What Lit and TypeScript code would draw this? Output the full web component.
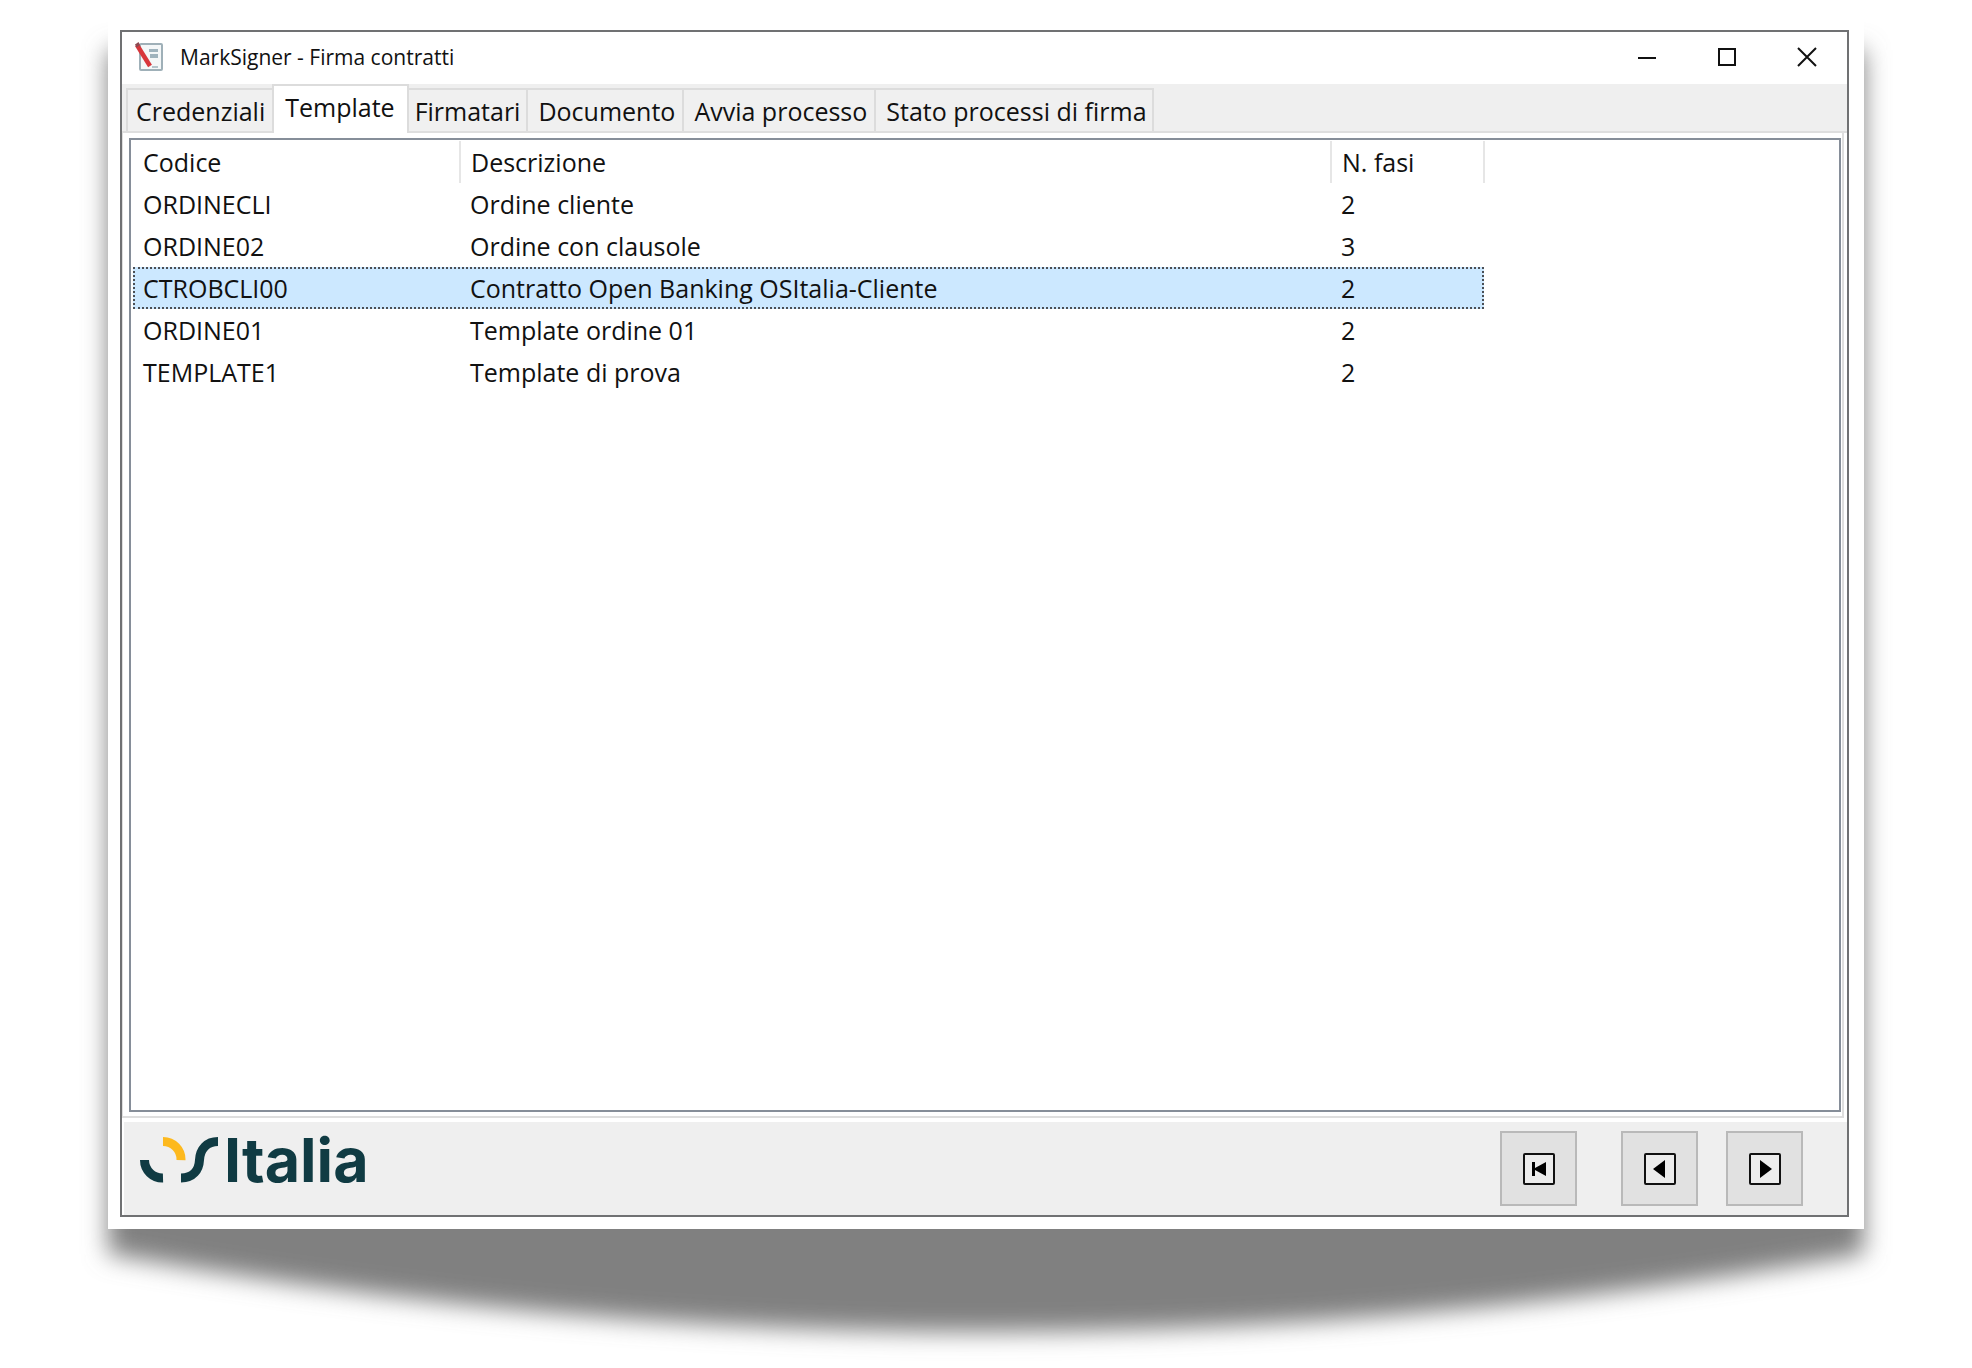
import { LitElement, html, css, svg } from "lit";
import { customElement, state } from "lit/decorators.js";
import { classMap } from "lit/directives/class-map.js";

interface Template { code: string; description: string; phases: number; }

const TABS = ["Credenziali", "Template", "Firmatari", "Documento", "Avvia processo", "Stato processi di firma"];

const TEMPLATES: Template[] = [
  { code: "ORDINECLI", description: "Ordine cliente", phases: 2 },
  { code: "ORDINE02", description: "Ordine con clausole", phases: 3 },
  { code: "CTROBCLI00", description: "Contratto Open Banking OSItalia-Cliente", phases: 2 },
  { code: "ORDINE01", description: "Template ordine 01", phases: 2 },
  { code: "TEMPLATE1", description: "Template di prova", phases: 2 },
];

const NAV = [
  { label: "Primo", shape: svg`<path d="M10 10h3v6l11-6v14l-11-6v6h-3z"/>` },
  { label: "Precedente", shape: svg`<path d="M22 8v18L10 17z"/>` },
  { label: "Successivo", shape: svg`<path d="M12 8v18l12-9z"/>` },
];

@customElement("app-root")
export class AppRoot extends LitElement {
  @state() private tab = 1;
  @state() private selected = 2;

  static styles = css`
    :host {
      display: flex;
      min-height: 100vh;
      box-sizing: border-box;
      padding: 0 108px 139px;
      background: #fff;
      color: #111;
      font: 25px/42px "Open Sans", "Noto Sans", sans-serif;
      overflow: hidden;
    }
    * { box-sizing: border-box; }
    button { font: inherit; color: inherit; border: 0; background: none; padding: 0; margin: 0; }
    svg { display: block; }
    .sheet { position: relative; flex: 1; display: flex; padding: 30px 15px 12px 12px; min-width: 0; }
    .shadow { position: absolute; inset: 0 -108px -139px; width: calc(100% + 216px); height: calc(100% + 139px); }
    .paper { position: absolute; inset: 0; background: #fff; }
    .window {
      position: relative; flex: 1; min-width: 0;
      display: flex; flex-direction: column;
      border: 2px solid #707173; background: #fff;
    }
    .titlebar { display: flex; align-items: center; height: 52px; padding: 0 10px 2px 12px; flex: none; }
    .title { flex: 1; margin: 0 0 0 16px; font-size: 21px; line-height: 28px; font-weight: 400; }
    .sys { display: flex; gap: 20px; }
    .sys button { width: 60px; height: 40px; display: grid; place-items: center; }
    .tabs { display: flex; align-items: flex-end; height: 49px; padding-left: 4px; background: #efefef; flex: none; border-bottom: 2px solid #dedede; }
    .tab {
      height: 43px; padding: 0 7px 0 10px; line-height: 38px; white-space: nowrap;
      border: 2px solid #dcdcdc; border-width: 2px 0 0 2px; background: #f0f0f0;
    }
    .tab:first-child { padding: 0 7px 0 8px; }
    .tab:last-child { border-right-width: 2px; padding-right: 5px; }
    .tab.on { height: 49px; margin-bottom: -2px; padding: 0 12px 6px 11px; border-width: 2px 2px 0; background: #fff; }
    .tab.on + .tab { border-left-width: 0; padding: 0 6px; }
    .panel { flex: 1; display: flex; margin: 0 3px 0 0; padding: 5px 1px 4px 6px; border: 2px solid #dedede; border-top: 0; border-left-width: 1px; }
    .list { flex: 1; border: 2px solid #868e99; padding: 1px 2px; }
    table { border-collapse: collapse; table-layout: fixed; width: calc(100% - 352px); }
    .c-code { width: 327px; }
    .c-phases { width: 153px; }
    th, td { height: 42px; padding: 0 0 0 10px; text-align: left; font-weight: 400; white-space: nowrap; line-height: 38px; }
    th { border-right: 2px solid #e6e6e6; }
    .sel td { background: #cce8ff; }
    .sel { outline: 2px dotted #4b4f55; outline-offset: -2px; }
    .footer { display: flex; align-items: center; height: 93px; flex: none; margin: 4px 0 0 2px; padding: 0 44px 0 16px; background: #efefef; }
    .logo { display: flex; align-items: center; gap: 4px; margin-bottom: 18px; color: #103b43; }
    .word { font: 700 61px/46px Inter, sans-serif; }
    .nav { margin-left: auto; display: flex; gap: 28px; }
    .nav button { width: 77px; height: 75px; display: grid; place-items: center; border: 2px solid #b9b9b9; background: #e1e1e1; }
    .nav button:first-child { margin-right: 16px; }
  `;

  render() {
    return html`
      <main class="sheet">
        <svg class="shadow" viewBox="0 0 1972 1368" preserveAspectRatio="none" aria-hidden="true">
          <defs><filter id="soft" x="-5%" y="-5%" width="110%" height="110%"><feGaussianBlur stdDeviation="12"/></filter></defs>
          <path d="M108 50H1864V1254Q986 1410 108 1254Z" fill="#808080" filter="url(#soft)"/>
        </svg>
        <div class="paper"></div>
        <section class="window">
          <header class="titlebar">
            <svg width="30" height="30" viewBox="0 0 30 30" aria-hidden="true">
              <rect x="6" y="2" width="22" height="26" rx="1" fill="#f4f7f8" stroke="#9fb0b8" stroke-width="2"/>
              <path d="M15 7h9v3h-9zM16 12h8v4h-8z" fill="#9fb3bd"/>
              <path d="M18 25h6" stroke="#9fb3bd" stroke-width="1.5"/>
              <path d="M3 3 16 24" stroke="#d8363b" stroke-width="4.5"/>
              <path d="M1 2.500 4.500 0 6 3 2.500 5.500z" fill="#8d4a52"/>
            </svg>
            <h1 class="title">MarkSigner - Firma contratti</h1>
            <div class="sys">
              <button aria-label="Riduci a icona"><svg width="20" height="20"><path d="M1 11h18" stroke="#111" stroke-width="2"/></svg></button>
              <button aria-label="Ingrandisci"><svg width="20" height="20"><path d="M2 2h16v16H2z" fill="none" stroke="#111" stroke-width="2"/></svg></button>
              <button aria-label="Chiudi"><svg width="20" height="20"><path d="m1 1 18 18M19 1 1 19" stroke="#111" stroke-width="2"/></svg></button>
            </div>
          </header>
          <nav class="tabs" role="tablist">
            ${TABS.map((t, i) => html`<button role="tab" aria-selected=${i === this.tab} class=${classMap({ tab: true, on: i === this.tab })} @click=${() => (this.tab = i)}>${t}</button>`)}
          </nav>
          <div class="panel">
            <div class="list">
              <table>
                <colgroup><col class="c-code"><col><col class="c-phases"></colgroup>
                <thead><tr><th>Codice</th><th>Descrizione</th><th>N. fasi</th></tr></thead>
                <tbody>
                  ${TEMPLATES.map((r, i) => html`<tr class=${classMap({ sel: i === this.selected })} @click=${() => (this.selected = i)}><td>${r.code}</td><td>${r.description}</td><td>${r.phases}</td></tr>`)}
                </tbody>
              </table>
            </div>
          </div>
          <footer class="footer">
            <div class="logo">
              <svg width="80" height="46" viewBox="0 0 80 46" fill="none" stroke-width="9" aria-hidden="true">
                <path d="M4.500 23A18 18 0 0 0 23 41" stroke="#103b43"/>
                <path d="M23 4.500A18 18 0 0 1 41 23" stroke="#fdb91e"/>
                <path d="M41 41C53 41 59 33 59.500 23C60 12 67 4.500 78 4.500" stroke="#103b43"/>
              </svg>
              <span class="word">Italia</span>
            </div>
            <div class="nav">
              ${NAV.map((n) => html`<button aria-label=${n.label}><svg width="34" height="34" viewBox="0 0 34 34"><rect x="2" y="2" width="30" height="30" rx="1" fill="#ececec" stroke="#111" stroke-width="2"/>${n.shape}</svg></button>`)}
            </div>
          </footer>
        </section>
      </main>
    `;
  }
}
